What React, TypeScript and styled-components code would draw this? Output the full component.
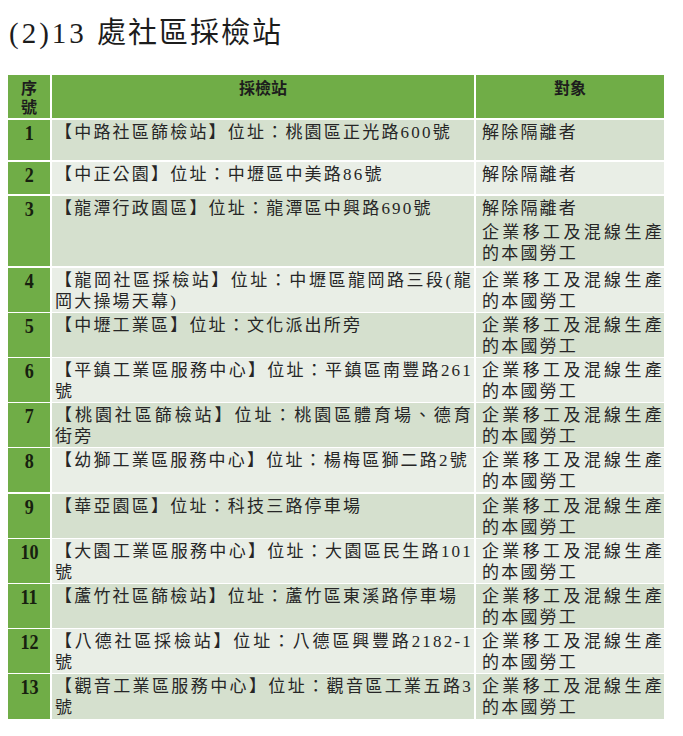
import React from "react";
import styled, { createGlobalStyle } from "styled-components";

const Global = createGlobalStyle`
  html, body { margin: 0; padding: 0; background: #ffffff; }
  body { font-family: "Liberation Serif", "Noto Sans CJK TC", serif; color: #222; }
`;

const Page = styled.div`
  width: 683px;
  height: 736px;
  padding: 16px 0 0 8px;
  box-sizing: border-box;
  background: #fff;
`;

const Title = styled.h1`
  margin: 0 0 0 1px;
  font-family: "Liberation Serif", "Noto Sans CJK TC", serif;
  font-weight: 400;
  font-size: 29px;
  line-height: 34px;
  letter-spacing: 2px;
  color: #1c1c1c;
  height: 59px;
`;

const Ascii = styled.span`
  letter-spacing: 3px;
`;

const Table = styled.div`
  display: flex;
  flex-direction: column;
  gap: 2px;
  width: 656px;
`;

const Row = styled.div<{ $h: number }>`
  display: grid;
  grid-template-columns: 42px 422px 188px;
  gap: 2px;
  height: ${(p) => p.$h}px;
`;

const HeadCell = styled.div`
  background: #70ad47;
  color: #1d1d1d;
  font-weight: 700;
  font-size: 16px;
  line-height: 19px;
  text-align: center;
  padding-top: 4px;
  box-sizing: border-box;
`;

const NumCell = styled.div`
  background: #70ad47;
  color: #17200f;
  font-family: "Liberation Serif", serif;
  font-weight: 700;
  font-size: 21px;
  line-height: 24px;
  text-align: center;
  padding-top: 1px;
  box-sizing: border-box;
`;

const Num = styled.span`
  display: inline-block;
  transform: scaleX(0.86);
`;

const TextCell = styled.div<{ $band: boolean; $pl: number; $pr: number }>`
  background: ${(p) => (p.$band ? "#d5e0ce" : "#e9eee6")};
  font-size: 17px;
  line-height: 21px;
  letter-spacing: 2.2px;
  text-align: justify;
  padding: 2px ${(p) => p.$pr}px 0 ${(p) => p.$pl}px;
  box-sizing: border-box;
  color: #262626;
`;

const Para = styled.div<{ $gap?: number }>`
  margin-top: ${(p) => p.$gap ?? 0}px;
`;

const MIGRANT = "企業移工及混線生產的本國勞工";
const RELEASED = "解除隔離者";

type R = { n: string; site: string; target: string[]; h: number };

const rows: R[] = [
  { n: "1", site: "【中路社區篩檢站】位址：桃園區正光路600號", target: [RELEASED], h: 40 },
  { n: "2", site: "【中正公園】位址：中壢區中美路86號", target: [RELEASED], h: 32 },
  { n: "3", site: "【龍潭行政園區】位址：龍潭區中興路690號", target: [RELEASED, MIGRANT], h: 70 },
  { n: "4", site: "【龍岡社區採檢站】位址：中壢區龍岡路三段(龍岡大操場天幕)", target: [MIGRANT], h: 43 },
  { n: "5", site: "【中壢工業區】位址：文化派出所旁", target: [MIGRANT], h: 43 },
  { n: "6", site: "【平鎮工業區服務中心】位址：平鎮區南豐路261號", target: [MIGRANT], h: 43 },
  { n: "7", site: "【桃園社區篩檢站】位址：桃園區體育場、德育街旁", target: [MIGRANT], h: 43 },
  { n: "8", site: "【幼獅工業區服務中心】位址：楊梅區獅二路2號", target: [MIGRANT], h: 44 },
  { n: "9", site: "【華亞園區】位址：科技三路停車場", target: [MIGRANT], h: 43 },
  { n: "10", site: "【大園工業區服務中心】位址：大園區民生路101號", target: [MIGRANT], h: 43 },
  { n: "11", site: "【蘆竹社區篩檢站】位址：蘆竹區東溪路停車場", target: [MIGRANT], h: 43 },
  { n: "12", site: "【八德社區採檢站】位址：八德區興豐路2182-1號", target: [MIGRANT], h: 43 },
  { n: "13", site: "【觀音工業區服務中心】位址：觀音區工業五路3號", target: [MIGRANT], h: 45 },
];

export default function App() {
  return (
    <Page>
      <Global />
      <Title>
        <Ascii>(2)13 </Ascii>處社區採檢站
      </Title>
      <Table>
        <Row $h={43}>
          <HeadCell>
            序<br />號
          </HeadCell>
          <HeadCell>採檢站</HeadCell>
          <HeadCell>對象</HeadCell>
        </Row>
        {rows.map((r, i) => (
          <Row key={r.n} $h={r.h}>
            <NumCell>
              <Num>{r.n}</Num>
            </NumCell>
            <TextCell $band={i % 2 === 0} $pl={3} $pr={1}>
              {r.site}
            </TextCell>
            <TextCell $band={i % 2 === 0} $pl={6} $pr={0}>
              {r.target.map((t, k) => (
                <Para key={k} $gap={k > 0 ? 3 : 0}>
                  {t}
                </Para>
              ))}
            </TextCell>
          </Row>
        ))}
      </Table>
    </Page>
  );
}
